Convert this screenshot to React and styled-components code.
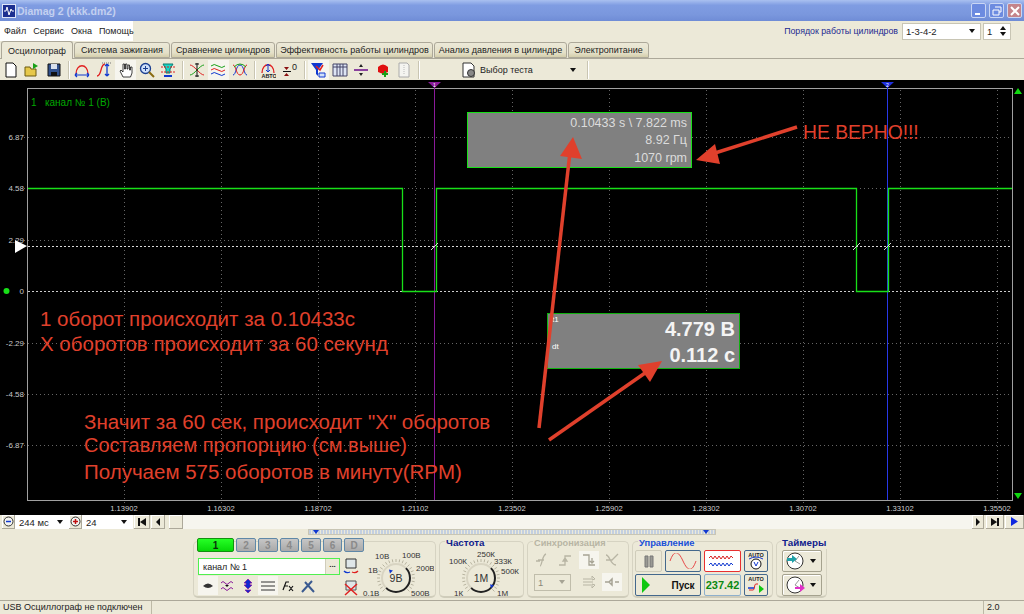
import React from "react";
import styled, { createGlobalStyle } from "styled-components";

const GlobalStyle = createGlobalStyle`
  html, body { margin: 0; padding: 0; background: #ece9d8; }
  body { width: 1024px; height: 614px; overflow: hidden; font-family: "Liberation Sans", Arial, sans-serif; font-size: 9px; color: #222; }
  * { box-sizing: border-box; }
`;

const Window = styled.div`
  width: 1024px;
  height: 614px;
  display: flex;
  flex-direction: column;
  background: #ece9d8;
`;

const TitleBar = styled.div`
  height: 21px;
  display: flex;
  align-items: center;
  padding: 0 2px;
  background: linear-gradient(180deg, #a9c0f0 0%, #7f9ce2 25%, #7a97dd 70%, #6f8cd6 100%);
`;

const AppLogo = styled.div`
  width: 14px;
  height: 14px;
  margin-right: 1px;
  background: #1c2f90;
  border: 1px solid #dfe6f8;
  display: flex;
`;

const TitleText = styled.div`
  flex: 1;
  font-size: 10.5px;
  font-weight: bold;
  color: #c3d0f0;
`;

const WinButton = styled.div`
  width: 15px;
  height: 15px;
  margin-left: 3px;
  border-radius: 2px;
  border: 1px solid #c9d6f4;
  background: ${p => (p.$close ? "#c4848a" : "#6c8be0")};
  display: flex;
  align-items: center;
  justify-content: center;
`;

const MenuRow = styled.div`
  height: 20px;
  display: flex;
  align-items: center;
  justify-content: space-between;
  padding-right: 13px;
`;

const Menu = styled.div`
  width: 133px;
  height: 100%;
  background: #fff;
  display: flex;
  align-items: center;
  gap: 7px;
  padding-left: 4px;
`;

const MenuItem = styled.span`
  font-size: 9px;
  color: #222;
`;

const OrderBox = styled.div`
  display: flex;
  align-items: center;
  gap: 2px;
`;

const OrderLabel = styled.span`
  color: #1c2a90;
  font-size: 8.8px;
  margin-right: 2px;
`;

const Combo = styled.div`
  width: ${p => p.$w}px;
  height: ${p => p.$h || 17}px;
  background: ${p => p.$bg || "#fff"};
  border: 1px solid ${p => p.$border || "#c8c5b4"};
  display: flex;
  align-items: center;
  justify-content: space-between;
  padding: 0 3px;
  font-size: ${p => p.$fs || 9.5}px;
  color: ${p => p.$color || "#222"};
`;

const ArrowDown = styled.i`
  width: 0;
  height: 0;
  margin-right: 2px;
  border-left: 3.5px solid transparent;
  border-right: 3.5px solid transparent;
  border-top: 4px solid ${p => p.$color || "#111"};
`;

const TabRow = styled.div`
  height: 18px;
  display: flex;
  align-items: flex-end;
  padding-left: 1px;
  gap: 1px;
  border-bottom: 1px solid #aca899;
`;

const Tab = styled.div`
  width: ${p => p.$w}px;
  height: ${p => (p.$active ? 18 : 16)}px;
  margin-bottom: ${p => (p.$active ? -1 : 0)}px;
  border: 1px solid #aca899;
  border-bottom: ${p => (p.$active ? "none" : "1px solid #aca899")};
  border-radius: 3px 3px 0 0;
  background: ${p => (p.$active ? "#ece9d8" : "linear-gradient(180deg,#ece9d8 0%,#e4e0c8 70%,#d4ceab 100%)")};
  display: flex;
  align-items: center;
  justify-content: center;
  font-size: 9px;
  color: #222;
  white-space: nowrap;
`;

const Toolbar = styled.div`
  height: 21px;
  display: flex;
  align-items: center;
`;

const ToolButton = styled.div`
  width: 21.5px;
  height: 20px;
  display: flex;
  align-items: center;
  justify-content: center;
  background: ${p => (p.$on ? "#f6f5ee" : "transparent")};
`;

const ToolSep = styled.div`
  width: 7px;
  height: 18px;
  display: flex;
  justify-content: center;
  &::before {
    content: "";
    width: 1px;
    background: #c9c5b2;
    box-shadow: 1px 0 0 #fff;
  }
`;

const TestPicker = styled.div`
  width: 162px;
  height: 20px;
  display: flex;
  align-items: center;
  padding: 0 6px 0 39px;
  gap: 3px;
  font-size: 9px;
`;

const TestLabel = styled.span`
  flex: 1;
`;

const Scope = styled.div`
  position: relative;
  height: 435px;
  background: #000;
  overflow: hidden;
`;

const Plot = styled.svg`
  display: block;
`;

const ArrowsLayer = styled.svg`
  position: absolute;
  left: 0;
  top: 0;
  pointer-events: none;
`;

const ChannelName = styled.div`
  position: absolute;
  left: 31px;
  top: 17px;
  color: #00a800;
  font-size: 10px;
  white-space: pre;
`;

const InfoBox = styled.div`
  position: absolute;
  left: ${p => p.$x}px;
  top: ${p => p.$y}px;
  width: ${p => p.$w}px;
  height: ${p => p.$h}px;
  background: #808080;
  border: 1px solid ${p => p.$border};
  display: flex;
  flex-direction: column;
  justify-content: center;
  align-items: flex-end;
  padding: 2px 4px 0 0;
`;

const InfoLine = styled.div`
  font-size: 12.5px;
  line-height: 17.5px;
  color: #dcdcdc;
`;

const BigLine = styled.div`
  font-size: 20px;
  line-height: 26px;
  font-weight: bold;
  color: #f4f4f4;
`;

const TinyTag = styled.span`
  position: absolute;
  left: 4px;
  top: ${p => p.$y}px;
  font-size: 8px;
  color: #fff;
`;

const Note = styled.div`
  position: absolute;
  left: ${p => p.$x}px;
  top: ${p => p.$y}px;
  color: #e0402c;
  font-size: ${p => p.$fs || 20.5}px;
  line-height: 25px;
  white-space: nowrap;
`;

const ScrollRow = styled.div`
  height: 14px;
  display: flex;
  align-items: stretch;
  padding-left: 2px;
`;

const ScrollButton = styled.div`
  width: ${p => p.$w}px;
  margin-left: ${p => p.$ml || 0}px;
  background: #ece9d8;
  border-right: 1px solid #aca899;
  border-bottom: 1px solid #aca899;
  box-shadow: inset 1px 1px 0 #fff;
  display: flex;
  align-items: center;
  justify-content: center;
`;

const ScrollTrack = styled.div`
  flex: 1;
  background: #f6f5ee;
`;

const Panel = styled.div`
  height: 71px;
  padding-left: 193px;
  display: flex;
  flex-direction: column;
`;

const SplitterRow = styled.div`
  height: 6px;
  width: 408px;
  margin-left: 115px;
  flex: none;
  background: repeating-linear-gradient(90deg, #c3cfe0 0 2px, #ece9d8 2px 3px);
  border: 1px solid #c8c5b4;
  display: flex;
  align-items: center;
  justify-content: space-between;
  padding: 0 4px;
`;

const Groups = styled.div`
  display: flex;
  gap: 3px;
  margin-top: 6px;
  height: 57px;
`;

const Group = styled.div`
  position: relative;
  width: ${p => p.$w}px;
  height: 57px;
  border: 1px solid #d6d3c2;
  border-bottom: 2px solid #cfccba;
  border-radius: 5px;
  flex: none;
`;

const GroupTitle = styled.div`
  position: absolute;
  left: ${p => p.$x || 5}px;
  top: -5px;
  padding: 0 1px;
  background: #ece9d8;
  font-size: ${p => p.$fs || 9.8}px;
  font-weight: bold;
  color: ${p => p.$color};
  line-height: 12px;
  white-space: nowrap;
`;

const ChannelGroup = styled(Group)`
  display: flex;
  padding-left: 3px;
`;

const ChannelLeft = styled.div`
  width: 167px;
  flex: none;
  margin-top: -4px;
`;

const ChannelButtons = styled.div`
  display: flex;
  gap: 2px;
`;

const ChannelButton = styled.div`
  width: ${p => (p.$on ? 38 : 20)}px;
  height: 14px;
  border: 1px solid ${p => (p.$on ? "#12910f" : "#5f88a8")};
  border-radius: 2px;
  background: ${p => (p.$on ? "linear-gradient(180deg,#26ff26,#08d808)" : "linear-gradient(180deg,#c6c6c6,#a9a9a9)")};
  color: ${p => (p.$on ? "#0a300a" : "#8a8a8a")};
  font-size: 10px;
  font-weight: bold;
  display: flex;
  align-items: center;
  justify-content: center;
`;

const ChannelBody = styled.div`
  display: flex;
  margin-top: 6px;
`;

const ChannelForm = styled.div`
  width: 142px;
  margin-left: 1px;
`;

const NameField = styled.div`
  height: 17px;
  border: 1px solid #4ff04f;
  background: #fff;
  display: flex;
  align-items: center;
  justify-content: space-between;
  padding-left: 4px;
  font-size: 9px;
`;

const DotsButton = styled.div`
  width: 14px;
  height: 15px;
  background: #ece9d8;
  border-left: 1px solid #d0cdbb;
  font-size: 8px;
  font-weight: bold;
  text-align: center;
  line-height: 11px;
`;

const IconRow = styled.div`
  display: flex;
  margin-top: 1px;
`;

const SmallTool = styled.div`
  width: 20px;
  height: 19px;
  display: flex;
  align-items: center;
  justify-content: center;
  background: ${p => (p.$on ? "#f6f5ee" : "transparent")};
`;

const SideIcons = styled.div`
  width: 16px;
  margin-left: 3px;
  display: flex;
  flex-direction: column;
  gap: 6px;
`;

const KnobBox = styled.div`
  flex: none;
  margin-left: -8px;
`;

const SyncGrid = styled.div`
  display: grid;
  grid-template-columns: repeat(4, 23.5px);
  grid-auto-rows: 22px;
  padding: 7px 0 0 2px;
  justify-items: center;
  align-items: center;
`;

const SyncCombo = styled(Combo)`
  grid-column: span 2;
  justify-self: start;
  margin-left: 4px;
`;

const SyncCell = styled.div`
  width: 20px;
  height: 18px;
  display: flex;
  align-items: center;
  justify-content: center;
  background: ${p => (p.$on ? "#f6f5ee" : "transparent")};
`;

const ControlGrid = styled.div`
  display: grid;
  grid-template-columns: 27px 36px 37px 24px;
  grid-template-rows: 22px 22px;
  gap: 2px 3px;
  padding: 8px 0 0 2px;
`;

const CtlButton = styled.div`
  grid-column: ${p => (p.$wide ? "span 2" : "auto")};
  border: 1px solid ${p => p.$border || "#44688c"};
  border-radius: 2px;
  background: ${p => p.$bg || "#ece9d8"};
  display: flex;
  align-items: center;
  justify-content: center;
  gap: 20px;
  font-size: 10px;
  font-weight: bold;
  color: #111;
`;

const Counter = styled(CtlButton)`
  color: #0b8a12;
  font-size: 11px;
`;

const TimerStack = styled.div`
  display: flex;
  flex-direction: column;
  gap: 2px;
  padding: 8px 0 0 5px;
`;

const TimerButton = styled.div`
  width: 40px;
  height: 22px;
  border: 1px solid #a5a28e;
  border-radius: 2px;
  box-shadow: inset 1px 1px 0 #fff;
  display: flex;
  align-items: center;
  justify-content: center;
  gap: 4px;
`;

const StatusBar = styled.div`
  height: 14px;
  border-top: 1px solid #aca899;
  display: flex;
  align-items: center;
  font-size: 9px;
`;

const StatusCell = styled.div`
  width: ${p => p.$w}px;
  flex: ${p => (p.$w ? "none" : 1)};
  height: 100%;
  padding-left: 3px;
  border-right: ${p => (p.$last ? "none" : "1px solid #bdb9a6")};
  line-height: 13px;
  white-space: nowrap;
`;

const Ico = ({ children, w = 16, h = 16 }) => (
  <svg width={w} height={h} viewBox={`0 0 ${w} ${h}`} fill="none">
    {children}
  </svg>
);

const toolIcons = [
  <path d="M3 1h7l3 3v11H3z" fill="#fff" stroke="#111" />,
  <>
    <path d="M1 14V5h5l1 2h5v7z" fill="#e6c84a" stroke="#6a5a10" />
    <path d="M9 1l5 3-5 3z" fill="#18a018" />
  </>,
  <>
    <path d="M2 2h12v12H2z" fill="#30508c" stroke="#111" />
    <path d="M5 2h6v5H5z" fill="#d8e0ec" />
    <path d="M5 10h6v4H5z" fill="#111" />
  </>,
  <>
    <path d="M2 12C2 1 14 1 14 12" stroke="#e02020" strokeWidth="1.3" />
    <path d="M1 13h14M1 13l2-2M1 13l2 2M15 13l-2-2M15 13l-2 2" stroke="#1038d0" strokeWidth="1.2" />
  </>,
  <>
    <path d="M1 14C6 14 4 2 9 2" stroke="#e02020" strokeWidth="1.3" />
    <path d="M11 2v12M11 2l-2 2M11 2l2 2M11 14l-2-2M11 14l2-2" stroke="#1038d0" strokeWidth="1.3" />
    <path d="M6 1h9" stroke="#777" strokeDasharray="1 1" />
  </>,
  <path d="M6 15L3 9l1-1 2 2V2h1.5v5h1V2H10v5h1V3h1.5v5h1V5H15v6l-1.5 4z" fill="#fff" stroke="#111" strokeWidth="0.8" />,
  <>
    <circle cx="6.5" cy="6.5" r="5" fill="#cfe0fa" stroke="#1b3f90" strokeWidth="1.3" />
    <path d="M4 6.5h5M6.5 4v5" stroke="#1b3f90" />
    <path d="M10 10l5 5" stroke="#8a6a10" strokeWidth="2" />
  </>,
  <>
    <path d="M3 2h10l-3 5v4H6V7z" fill="#18d8c8" stroke="#0a7a70" />
    <path d="M1 5h14M1 10h14" stroke="#e02020" strokeDasharray="2 1" />
    <path d="M4 14h8" stroke="#1038d0" strokeWidth="2" />
  </>,
  <>
    <path d="M1 3C5 3 11 13 15 13" stroke="#e02020" />
    <path d="M1 13C5 13 11 3 15 3" stroke="#18a018" />
    <path d="M8 1v14M6 2h4M6 14h4" stroke="#111" />
  </>,
  <>
    <path d="M1 4q3-3 7 0t7 0" stroke="#18a018" />
    <path d="M1 8q3-3 7 0t7 0" stroke="#e02020" />
    <path d="M1 12q3-3 7 0t7 0" stroke="#1038d0" />
  </>,
  <>
    <path d="M1 13C4 13 4 3 8 3s4 10 7 10" stroke="#1038d0" />
    <path d="M1 3C4 3 4 13 8 13s4-10 7-10" stroke="#e02020" />
    <path d="M2 5q6-6 12 0" stroke="#18a018" />
  </>,
  <>
    <path d="M2 11C2 0 14 0 14 11" stroke="#e02020" strokeWidth="1.3" />
    <path d="M8 2v8M8 2l-2 2M8 2l2 2M8 10l-2-2M8 10l2-2" stroke="#1038d0" />
    <text x="1.5" y="15.5" fontSize="5.5" fontWeight="bold" fill="#222" fontFamily="Liberation Sans">АВТО</text>
  </>,
  <>
    <path d="M2 5h5L4.5 8zM2 14h5l-2.5-3z" fill="#8a1010" />
    <path d="M1 9.5h8" stroke="#111" />
    <text x="10" y="8" fontSize="9" fill="#222" fontFamily="Liberation Sans">0</text>
  </>,
  <>
    <path d="M1 1h12L8 8v6L6 12V8z" fill="#1038d0" />
    <path d="M6 4l4 4 3-5" stroke="#e02020" strokeWidth="1.5" />
    <path d="M9 11h6v4H9z" fill="#cfe0fa" stroke="#1038d0" />
  </>,
  <>
    <path d="M1 2h14v12H1z" fill="#dde4f4" stroke="#446" />
    <path d="M1 5h14M5 2v12M8 2v12M11 2v12" stroke="#446" />
  </>,
  <>
    <path d="M1 8h14" stroke="#6a0a8a" strokeWidth="1.5" />
    <path d="M8 2l-2 3h4zM8 14l-2-3h4z" fill="#222" />
  </>,
  <>
    <path d="M3 5q5-5 10 0v5l-5 2-5-2z" fill="#e01010" />
    <path d="M10 9v6M7 12h6" stroke="#18a018" strokeWidth="2" />
  </>,
  <>
    <path d="M3 1h8l2 2v12H3z" fill="#f4f4f0" stroke="#aaa" />
    <path d="M8 3v10" stroke="#bbb" strokeDasharray="1 1" />
  </>,
];

const CHANNEL_BUTTONS = ["2", "3", "4", "5", "6", "D"];

const GRID_X = [124, 221, 318, 415, 512, 609, 706, 803, 900, 997];
const X_LABELS = ["1.13902", "1.16302", "1.18702", "1.21102", "1.23502", "1.25902", "1.28302", "1.30702", "1.33102", "1.35502"];
const Y_TICKS = [
  [137, "6.87"],
  [188, "4.58"],
  [240, "2.29"],
  [291, "0"],
  [343, "-2.29"],
  [394, "-4.58"],
  [445, "-6.87"],
];

const Chart = () => (
  <Plot width="1024" height="435" viewBox="0 80 1024 435">
    <rect x="27.5" y="88.5" width="985" height="412" stroke="#a0a0a0" fill="none" />
    {GRID_X.map(x => (
      <path key={x} d={`M${x + 0.5} 90V505`} stroke="#666" strokeDasharray="1 3" />
    ))}
    {Y_TICKS.map(([y, t]) => (
      <g key={t}>
        <path d={`M${t === "0" ? 28 : 24} ${y + 0.5}H1012`} stroke={t === "0" ? "#ccc" : "#666"} strokeDasharray={t === "0" ? "2 2" : "1 3"} />
        <text x="24" y={y + 3} textAnchor="end" fontSize="8" fill="#c8c8c8" fontFamily="Liberation Sans">
          {t}
        </text>
      </g>
    ))}
    {GRID_X.map((x, i) => (
      <text key={x} x={x} y="511" textAnchor="middle" fontSize="7.6" fill="#d0d0d0" fontFamily="Liberation Sans">
        {X_LABELS[i]}
      </text>
    ))}
    <path d="M28 246.5H1012" stroke="#d8d8d8" strokeDasharray="2 2" />
    <path d="M434.5 85V500" stroke="#8a1a9a" />
    <path d="M887.5 85V500" stroke="#2838e8" />
    <path d="M428 82h13l-6.5 6z" fill="#8a1a9a" />
    <path d="M881 82h13l-6.5 6z" fill="#2030e0" />
    <text x="434.5" y="87" textAnchor="middle" fontSize="5" fill="#fff" fontFamily="Liberation Sans">1</text>
    <text x="887.5" y="87" textAnchor="middle" fontSize="5" fill="#fff" fontFamily="Liberation Sans">2</text>
    <path d="M28 188.5H402.5V291.5H436.5V188.5H856.5V291.5H888.5V188.5H1012" stroke="#18e018" fill="none" strokeWidth="1.3" />
    <path d="M431 250l7-7M853 250l7-7M884 250l7-7" stroke="#d8d8d8" />
    <path d="M15 240l12 6-12 7z" fill="#fff" />
    <circle cx="6.5" cy="291" r="3" fill="#18e018" />
    <path d="M1014 94h8l-4-6zM1014 493h8l-4 6z" fill="#10d810" />
  </Plot>
);

const Arrows = () => (
  <ArrowsLayer width="1024" height="435" viewBox="0 80 1024 435">
    <path d="M539 428L570 152" stroke="#e0402c" strokeWidth="3.5" />
    <path d="M573 137l-13 19 22 3z" fill="#e0402c" />
    <path d="M797 127L715 153" stroke="#e0402c" strokeWidth="3.5" />
    <path d="M696 160l19-16 5 20z" fill="#e0402c" />
    <path d="M549 440L645 373" stroke="#e0402c" strokeWidth="3.5" />
    <path d="M662 361l-24 4 12 17z" fill="#e0402c" />
  </ArrowsLayer>
);

const KnobDrawing = ({ labels, center, angle, w, cx, cy }) => {
  const ticks = Array.from({ length: 25 }, (_, i) => -135 + i * 11.25);
  const rad = (angle * Math.PI) / 180;
  const sx = 14 * Math.sin(Math.PI / 4);
  return (
    <svg width={w} height="55" viewBox={`0 0 ${w} 55`}>
      {ticks.map(a => {
        const r = (a * Math.PI) / 180;
        return (
          <path
            key={a}
            d={`M${cx + 16 * Math.sin(r)} ${cy - 16 * Math.cos(r)}L${cx + 19 * Math.sin(r)} ${cy - 19 * Math.cos(r)}`}
            stroke="#b8b4a0"
          />
        );
      })}
      <path d={`M${cx - sx} ${cy + sx}A14 14 0 1 1 ${cx + sx} ${cy - sx}`} stroke="#d8d4c2" strokeWidth="2" fill="none" />
      <path d={`M${cx + sx} ${cy - sx}A14 14 0 0 1 ${cx - sx} ${cy + sx}`} stroke="#222" strokeWidth="2" fill="none" />
      <path d={`M${cx + 11 * Math.sin(rad)} ${cy - 11 * Math.cos(rad)}l4 1-3 3z`} fill="#1038d0" />
      <text x={cx} y={cy + 4} textAnchor="middle" fontSize="10.5" fill="#333" fontFamily="Liberation Sans">
        {center}
      </text>
      {labels.map(([x, y, t]) => (
        <text key={t} x={x} y={y} fontSize="8" fill="#333" fontFamily="Liberation Sans">
          {t}
        </text>
      ))}
    </svg>
  );
};

const SideTop = () => (
  <Ico>
    <path d="M3 1h10v9H3z" fill="#dfe6e8" stroke="#333" />
    <path d="M1 13a5 5 0 0 0 6 1" stroke="#1038d0" strokeWidth="1.3" />
    <path d="M15 13a5 5 0 0 1-6 1" stroke="#e02020" strokeWidth="1.3" />
  </Ico>
);

const SideBottom = () => (
  <Ico>
    <path d="M3 1h10v9H3z" fill="#dfe6e8" stroke="#555" />
    <path d="M2 4l12 11M14 4L2 15" stroke="#e02020" strokeWidth="1.5" />
  </Ico>
);

const channelTools = [
  { on: true, icon: <path d="M3 8q5-5 10 0-5 4-10 0z" fill="#333" /> },
  {
    icon: (
      <>
        <path d="M1 5q2-3 4 0t4 0 4 0" stroke="#8a1a9a" />
        <path d="M1 11q2-3 4 0t4 0 4 0" stroke="#8a1a9a" />
        <path d="M5 7h4l-2 2z" fill="#111" />
      </>
    ),
  },
  { icon: <path d="M8 1l4 4h-2v2h2l-4 4-4-4h2V5H4zM8 15l-3-3h6z" fill="#1028d0" stroke="#8a1a9a" strokeWidth="0.7" /> },
  { on: true, icon: <path d="M1 4h14M1 8h14M1 12h14" stroke="#333" /> },
  { icon: <path d="M3 12L6 4h3M4 8h4M9 8l4 5M13 8l-4 5" stroke="#111" strokeWidth="1.2" /> },
  { icon: <path d="M2 14L12 3M5 4l9 10" stroke="#3a5a90" strokeWidth="2" /> },
];

const syncIcons = [
  { icon: <path d="M2 9h4M6 14C8 14 8 3 12 2M4 8h6" stroke="#b8b5a4" strokeWidth="1.3" /> },
  { icon: <path d="M2 13h6V4h6M8 6L6 9h4z" stroke="#b8b5a4" strokeWidth="1.3" /> },
  { on: true, icon: <path d="M2 3h6v10h6M11 6v5M9 9l2 2 2-2" stroke="#a6a394" strokeWidth="1.3" /> },
  { icon: <path d="M2 3c4 0 4 10 10 10M2 8h6l6-6" stroke="#b8b5a4" strokeWidth="1.3" /> },
];

const ChannelPanel = () => (
  <ChannelGroup $w={243}>
    <ChannelLeft>
      <ChannelButtons>
        <ChannelButton $on>1</ChannelButton>
        {CHANNEL_BUTTONS.map(n => (
          <ChannelButton key={n}>{n}</ChannelButton>
        ))}
      </ChannelButtons>
      <ChannelBody>
        <ChannelForm>
          <NameField>
            канал № 1
            <DotsButton>...</DotsButton>
          </NameField>
          <IconRow>
            {channelTools.map((t, i) => (
              <SmallTool key={i} $on={t.on}>
                <Ico>{t.icon}</Ico>
              </SmallTool>
            ))}
          </IconRow>
        </ChannelForm>
        <SideIcons>
          <SideTop />
          <SideBottom />
        </SideIcons>
      </ChannelBody>
    </ChannelLeft>
    <KnobBox>
      <KnobDrawing
        center="9В"
        angle={-40}
        w={78}
        cx={40}
        cy={36}
        labels={[
          [7, 54, "0.1В"],
          [12, 31, "1В"],
          [19, 17, "10В"],
          [46, 16, "100В"],
          [60, 29, "200В"],
          [55, 54, "500В"],
        ]}
      />
    </KnobBox>
  </ChannelGroup>
);

const FrequencyPanel = () => (
  <Group $w={85}>
    <GroupTitle $color="#10208c">Частота</GroupTitle>
    <KnobDrawing
      center="1М"
      angle={125}
      w={83}
      cx={41}
      cy={36}
      labels={[
        [9, 22, "100К"],
        [37, 15, "250К"],
        [54, 22, "333К"],
        [61, 32, "500К"],
        [57, 54, "1М"],
        [14, 54, "1К"],
      ]}
    />
  </Group>
);

const SyncPanel = () => (
  <Group $w={102}>
    <GroupTitle $color="#b8b5a4" $fs={9.2}>Синхронизация</GroupTitle>
    <SyncGrid>
      {syncIcons.map((s, i) => (
        <SyncCell key={i} $on={s.on}>
          <Ico>{s.icon}</Ico>
        </SyncCell>
      ))}
      <SyncCombo $w={37} $bg="#ece9d8" $border="#c0bdab" $color="#8a8878">
        1
        <ArrowDown $color="#a6a394" />
      </SyncCombo>
      <SyncCell>
        <Ico>
          <path d="M2 5h8M2 8h10M2 11h8M11 2l3 3-3 1zM11 14l3-3-3-1z" stroke="#b8b5a4" />
        </Ico>
      </SyncCell>
      <SyncCell $on>
        <Ico>
          <path d="M1 8h4l3-3v6l-3-3M15 8h-4" stroke="#a6a394" strokeWidth="1.5" />
        </Ico>
      </SyncCell>
    </SyncGrid>
  </Group>
);

const AutoIcon = ({ children }) => (
  <Ico w={18} h={18}>
    <text x="9" y="5" textAnchor="middle" fontSize="5.5" fontWeight="bold" fill="#222" fontFamily="Liberation Sans">AUTO</text>
    {children}
  </Ico>
);

const ControlPanel = () => (
  <Group $w={141}>
    <GroupTitle $color="#1a50d8" $fs={9.4}>Управление</GroupTitle>
    <ControlGrid>
      <CtlButton $border="#cfccba">
        <Ico w={12} h={16}>
          <path d="M2 3h3v11H2zM7 3h3v11H7z" fill="#9a9a94" stroke="#777" />
        </Ico>
      </CtlButton>
      <CtlButton>
        <Ico w={28} h={16}>
          <path d="M1 8C5-3 9-3 14 8s9 11 13 0" stroke="#e84848" strokeWidth="1" />
        </Ico>
      </CtlButton>
      <CtlButton $border="#e83030" $bg="#fff">
        <Ico w={30} h={18}>
          <path d="M1 6l2-2 2 3 2-3 2 3 2-3 2 3 2-3 2 3 2-3 2 3 2-3 2 2" stroke="#d82020" />
          <path d="M1 13l2-2 2 3 2-3 2 3 2-3 2 3 2-3 2 3 2-3 2 3 2-3 2 2" stroke="#1038d0" />
        </Ico>
      </CtlButton>
      <CtlButton>
        <AutoIcon>
          <path d="M2 7q7-4 14 0" stroke="#1038d0" />
          <circle cx="9" cy="12" r="5" fill="#fff" stroke="#111" />
          <path d="M7 10l2 4 2-4" stroke="#1038d0" />
        </AutoIcon>
      </CtlButton>
      <CtlButton $wide>
        <Ico w={10} h={18}>
          <path d="M1 1l8 8-8 8z" fill="#10c810" />
        </Ico>
        Пуск
      </CtlButton>
      <Counter $border="#8fb0cc">237.42</Counter>
      <CtlButton>
        <AutoIcon>
          <path d="M2 14h4c2 0 1-6 3-6h2" stroke="#e02020" />
          <path d="M12 9l5 4-5 4z" fill="#10c810" />
          <path d="M1 12h6" stroke="#1038d0" strokeWidth="1.5" />
        </AutoIcon>
      </CtlButton>
    </ControlGrid>
  </Group>
);

const TimerIcon = ({ color, low }) => (
  <Ico w={20} h={18}>
    <circle cx="9" cy="9" r="8" fill="#fff" stroke="#333" />
    <path d="M9 9l4-5M9 9l5 3" stroke="#999" />
    <path d={low ? "M9 11h5V8l5 4-5 4v-3H9z" : "M1 6h5V3l5 4-5 4V9H1z"} fill={color} />
  </Ico>
);

const TimerPanel = () => (
  <Group $w={51}>
    <GroupTitle $x={4} $color="#10208c">Таймеры</GroupTitle>
    <TimerStack>
      <TimerButton>
        <TimerIcon color="#20a0a8" />
        <ArrowDown />
      </TimerButton>
      <TimerButton>
        <TimerIcon color="#e030c8" low />
        <ArrowDown />
      </TimerButton>
    </TimerStack>
  </Group>
);

export default function App() {
  return (
    <Window>
      <GlobalStyle />
      <TitleBar>
        <AppLogo>
          <svg width="12" height="12" viewBox="0 0 12 12" fill="none">
            <path d="M1 6h2l1-4 2 8 2-6 1 2h2" stroke="#fff" />
          </svg>
        </AppLogo>
        <TitleText>Diamag 2 (kkk.dm2)</TitleText>
        <WinButton>
          <svg width="10" height="10" viewBox="0 0 10 10">
            <path d="M1 7h5v2H1z" fill="#fff" />
          </svg>
        </WinButton>
        <WinButton>
          <svg width="10" height="10" viewBox="0 0 10 10" fill="none">
            <path d="M3 1h6v5H7M1 4h6v5H1z" stroke="#fff" />
          </svg>
        </WinButton>
        <WinButton $close>
          <svg width="10" height="10" viewBox="0 0 10 10" fill="none">
            <path d="M1 1l8 8M9 1l-8 8" stroke="#fff" strokeWidth="2" />
          </svg>
        </WinButton>
      </TitleBar>
      <MenuRow>
        <Menu>
          <MenuItem>Файл</MenuItem>
          <MenuItem>Сервис</MenuItem>
          <MenuItem>Окна</MenuItem>
          <MenuItem>Помощь</MenuItem>
        </Menu>
        <OrderBox>
          <OrderLabel>Порядок работы цилиндров</OrderLabel>
          <Combo $w={79}>
            1-3-4-2
            <ArrowDown />
          </Combo>
          <Combo $w={28}>
            1
            <svg width="8" height="12" viewBox="0 0 8 12">
              <path d="M4 1l3 4H1zM1 7h6l-3 4z" fill="#111" />
            </svg>
          </Combo>
        </OrderBox>
      </MenuRow>
      <TabRow>
        <Tab $active $w={72}>Осциллограф</Tab>
        <Tab $w={96}>Система зажигания</Tab>
        <Tab $w={104}>Сравнение цилиндров</Tab>
        <Tab $w={157}>Эффективность работы цилиндров</Tab>
        <Tab $w={133}>Анализ давления в цилиндре</Tab>
        <Tab $w={81}>Электропитание</Tab>
      </TabRow>
      <Toolbar>
        {toolIcons.map((icon, i) => (
          <React.Fragment key={i}>
            {[3, 8, 11, 13].includes(i) && <ToolSep />}
            <ToolButton $on={[5, 9, 13].includes(i)}>
              <Ico>{icon}</Ico>
            </ToolButton>
          </React.Fragment>
        ))}
        <ToolSep />
        <TestPicker>
          <Ico>
            <path d="M2 1h8l3 3v11H2z" fill="#fff" stroke="#333" />
            <circle cx="10" cy="11" r="3.5" fill="#888" stroke="#333" />
          </Ico>
          <TestLabel>Выбор теста</TestLabel>
          <ArrowDown />
        </TestPicker>
        <ToolSep />
      </Toolbar>
      <Scope>
        <Chart />
        <ChannelName>1   канал № 1 (В)</ChannelName>
        <InfoBox $x={467} $y={32} $w={225} $h={56} $border="#18e018">
          <InfoLine>0.10433 s \ 7.822 ms</InfoLine>
          <InfoLine>8.92 Гц</InfoLine>
          <InfoLine>1070 rpm</InfoLine>
        </InfoBox>
        <InfoBox $x={547} $y={233} $w={193} $h={56} $border="#10b010">
          <TinyTag $y={1}>t1</TinyTag>
          <TinyTag $y={28}>dt</TinyTag>
          <BigLine>4.779 В</BigLine>
          <BigLine>0.112 с</BigLine>
        </InfoBox>
        <Arrows />
        <Note $x={803} $y={40} $fs={19.3}>НЕ ВЕРНО!!!</Note>
        <Note $x={40} $y={226}>1 оборот происходит за 0.10433с</Note>
        <Note $x={40} $y={251}>Х оборотов происходит за 60 секунд</Note>
        <Note $x={84} $y={329}>Значит за 60 сек, происходит "Х" оборотов</Note>
        <Note $x={84} $y={353} $fs={20}>Составляем пропорцию (см.выше)</Note>
        <Note $x={84} $y={379}>Получаем 575 оборотов в минуту(RPM)</Note>
      </Scope>
      <ScrollRow>
        <ScrollButton $w={13}>
          <Ico w={11} h={11}>
            <circle cx="5.5" cy="5.5" r="4.5" fill="#f4f4f0" stroke="#333" />
            <path d="M3 5.5h5" stroke="#1038d0" strokeWidth="1.5" />
          </Ico>
        </ScrollButton>
        <Combo $w={54} $h={14} $border="#fff">244 мс<ArrowDown /></Combo>
        <ScrollButton $w={13}>
          <Ico w={11} h={11}>
            <circle cx="5.5" cy="5.5" r="4.5" fill="#f4f4f0" stroke="#333" />
            <path d="M3 5.5h5M5.5 3v5" stroke="#c01010" strokeWidth="1.5" />
          </Ico>
        </ScrollButton>
        <Combo $w={51} $h={14} $border="#fff">24<ArrowDown /></Combo>
        <ScrollButton $w={16} $ml={1}>
          <Ico w={10} h={8}>
            <path d="M1 0h2v8H1zM9 0v8L3 4z" fill="#111" />
          </Ico>
        </ScrollButton>
        <ScrollButton $w={14} $ml={1}>
          <Ico w={6} h={8}>
            <path d="M5 0v8L1 4z" fill="#111" />
          </Ico>
        </ScrollButton>
        <ScrollButton $w={14} $ml={4} />
        <ScrollTrack />
        <ScrollButton $w={12}>
          <Ico w={6} h={8}>
            <path d="M1 0v8l4-4z" fill="#111" />
          </Ico>
        </ScrollButton>
        <ScrollButton $w={18} $ml={2}>
          <Ico w={10} h={8}>
            <path d="M1 0v8l6-4zM7 0h2v8H7z" fill="#111" />
          </Ico>
        </ScrollButton>
        <ScrollButton $w={19} $ml={1}>
          <Ico w={9} h={9}>
            <path d="M1 0v9l7-4.5z" fill="#1028e0" />
          </Ico>
        </ScrollButton>
      </ScrollRow>
      <Panel>
        <SplitterRow>
          <ArrowDown $color="#1038d0" />
          <ArrowDown $color="#1038d0" />
        </SplitterRow>
        <Groups>
          <ChannelPanel />
          <FrequencyPanel />
          <SyncPanel />
          <ControlPanel />
          <TimerPanel />
        </Groups>
      </Panel>
      <StatusBar>
        <StatusCell $w={152}>USB Осциллограф не подключен</StatusCell>
        <StatusCell />
        <StatusCell $w={40} $last>2.0</StatusCell>
      </StatusBar>
    </Window>
  );
}
